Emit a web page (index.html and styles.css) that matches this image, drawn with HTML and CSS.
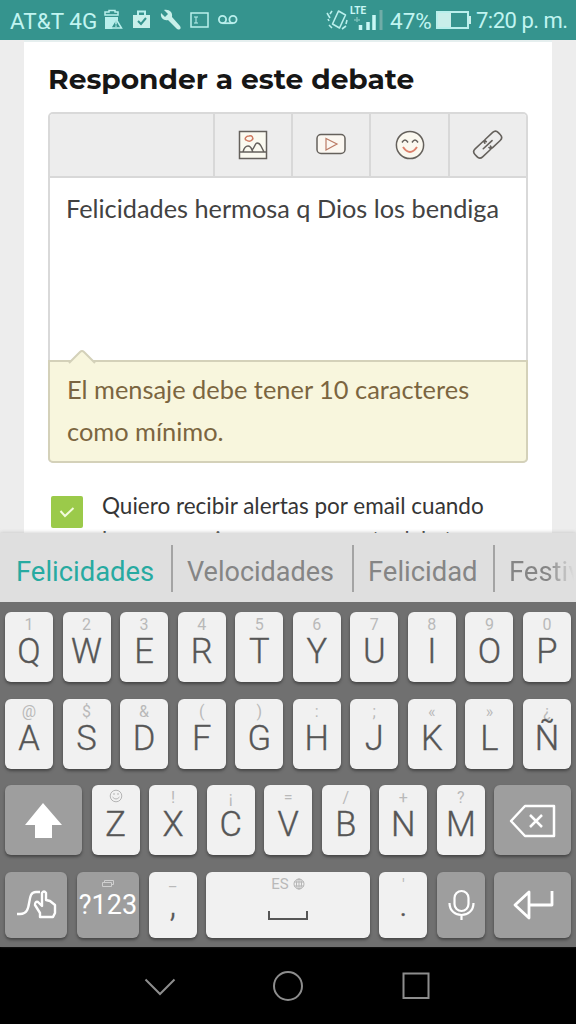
FILE: index.html
```html
<!DOCTYPE html>
<html lang="es">
<head>
<meta charset="utf-8">
<meta name="viewport" content="width=device-width">
<title>Responder a este debate</title>
<link rel="stylesheet" href="styles.css">
</head>
<body>
<header class="status">
  <span class="carrier">AT&amp;T 4G</span>
  <svg class="status-left" width="140" height="40" viewBox="0 0 140 40" fill="none" stroke="#b9efec" stroke-width="1.5">
    <path d="M5 15v-3h4v-1.500h6V12h3v3z"/><path d="M5 17h13v3l-6 9H5z" fill="#b9efec" stroke="none"/><path d="M16 19l5.500 9H10.500z" fill="#35948e"/><path d="M16 21v3.500M16 25.500v1.200"/>
    <path d="M33 15h17v13H33z" fill="#c9f0ea" stroke="none"/><path d="M38 15v-3.500h7V15" stroke-width="2"/><path d="M38 21l3 3 5-6" stroke="#35948e" stroke-width="2"/>
    <path d="M61 13l4 4 3-3-4-4c5-1 9 2 8 7l8 9c2 3-1 5-4 2l-8-8c-4 1-8-2-7-7z" fill="#c9f0ea" stroke="none"/>
    <path d="M91 13h17v14H91z"/><path d="M94 17h4M96 17v6M94 23h4" stroke-width="1"/>
    <circle cx="122.500" cy="19.500" r="3.600" stroke-width="1.800"/><circle cx="133" cy="19.500" r="3.600" stroke-width="1.800"/><path d="M122.500 23.200H133" stroke-width="1.800"/>
  </svg>
  <span class="grow"></span>
  <svg class="status-signal" width="60" height="40" viewBox="0 0 60 40" fill="none" stroke="#b9efec" stroke-width="1.6">
    <path d="M12.500 11l7 4-6 13-7-4zM1 13l3 5M2 19l1 2M6 11l-2 3M21 20l-1 4M16 29l4-3M3 25l3 3" stroke-linejoin="round"/>
    <text class="lte" x="24" y="14">LTE</text>
    <path d="M28 20h6M31 17v5" stroke="#75bdb7"/>
    <path d="M34.500 25v5M42 22v8M48 15v15" stroke="#c9f7f5" stroke-width="3.500"/>
    <path d="M55 10v20" stroke="#70aca7" stroke-width="3"/>
  </svg>
  <span class="percent">47%</span>
  <svg class="battery" width="38" height="40" viewBox="0 0 38 40"><path d="M2 12h31v16H2z" fill="none" stroke="#b9efec" stroke-width="2"/><path d="M3 13h13v14H3zM34 16h2v8h-2z" fill="#c9eeea"/></svg>
  <span class="clock">7:20 p. m.</span>
</header>
<main class="page">
  <section class="card">
    <h1 class="title">Responder a este debate</h1>
    <div class="editor">
      <div class="toolbar">
        <span class="tool-space"></span>
        <span class="tool"><svg width="30" height="30" viewBox="0 0 30 30" fill="#fbfaf0" stroke="#65615c" stroke-width="1.500"><path d="M1.500 1.500h27v27h-27zM2 22h26M5 22c1-4 3-6 5-6s3 1 4 4l1 2M14 20c2-1 3-7 5-7s3 1 4 3l3 6"/><path d="M8 10c-2-1 0-4 3-4 3-1 5 2 3 4-1 1-3 2-6 0z" stroke="#cf7a60"/></svg></span>
        <span class="tool"><svg width="30" height="30" viewBox="0 0 30 30" fill="#fbf7f1" stroke="#65615c" stroke-width="1.500"><rect x="1" y="4.500" width="28" height="19" rx="4"/><path d="M10 8.500l11 5.500-11 6z" stroke="#bb7b65" stroke-width="1.200"/></svg></span>
        <span class="tool"><svg width="30" height="30" viewBox="0 0 30 30" fill="none" stroke="#65615c" stroke-width="1.500"><circle cx="15" cy="15" r="13.600" fill="#fbf8ef"/><path d="M7 12.500q3-5 6 0M17 12.500q3-5 6 0"/><path d="M8 17q7 10 14 0" stroke="#dc806b" stroke-width="2"/></svg></span>
        <span class="tool"><svg width="30" height="30" viewBox="0 0 30 30" fill="none" stroke="#65615c" stroke-width="1.600" stroke-linejoin="round" stroke-linecap="round"><g transform="rotate(-43 15 15)"><path d="M14 11.500q0-2.500 3-2.500h10q4 0 4 4v3q0 4-4 4H17q-3 0-3-2.500"/><path d="M16 17.500q0 2.500-3 2.500H3q-4 0-4-4v-3q0-4 4-4h10q3 0 3 2.500"/><path d="M9 14.500h12"/></g></svg></span>
      </div>
      <div class="message">Felicidades hermosa q Dios los bendiga</div>
      <div class="warning">
        <svg class="warning-tip" width="26" height="13" viewBox="0 0 26 13"><path d="M0 13L11 2q2-2 4 0l11 11" fill="#f8f6dd" stroke="#d4d1b9" stroke-width="2"/></svg>
        <div class="warning-one">El mensaje debe tener 10 caracteres</div>
        <div class="warning-two">como mínimo.</div>
      </div>
    </div>
    <div class="subscribe">
      <span class="check"><svg width="16" height="12" viewBox="0 0 16 12" fill="none" stroke="#f3fbdc" stroke-width="2"><path d="M1.500 5l4.500 5 8.500-8"/></svg></span>
      <div class="subscribe-text">Quiero recibir alertas por email cuando<br><span class="second">haya mensajes nuevos en este debate</span></div>
    </div>
  </section>
</main>
<section class="keyboard">
  <div class="suggestions"><span class="word active">Felicidades</span><span class="word velocity">Velocidades</span><span class="word happiness">Felicidad</span><span class="word festival">Festiv</span></div>
  <div class="keys">
    <div class="row"><div class="key"><i>1</i><b>Q</b></div><div class="key"><i>2</i><b>W</b></div><div class="key"><i>3</i><b>E</b></div><div class="key"><i>4</i><b>R</b></div><div class="key"><i>5</i><b>T</b></div><div class="key"><i>6</i><b>Y</b></div><div class="key"><i>7</i><b>U</b></div><div class="key"><i>8</i><b>I</b></div><div class="key"><i>9</i><b>O</b></div><div class="key"><i>0</i><b>P</b></div></div>
    <div class="row"><div class="key"><i>@</i><b>A</b></div><div class="key"><i>$</i><b>S</b></div><div class="key"><i>&amp;</i><b>D</b></div><div class="key"><i>(</i><b>F</b></div><div class="key"><i>)</i><b>G</b></div><div class="key"><i>:</i><b>H</b></div><div class="key"><i>;</i><b>J</b></div><div class="key"><i>«</i><b>K</b></div><div class="key"><i>»</i><b>L</b></div><div class="key"><i>¿</i><b>Ñ</b></div></div>
    <div class="row">
      <div class="key dark wide"><svg width="77" height="70" viewBox="0 0 77 70"><path d="M38 18l19 22H47v13H30V40H20z" fill="#fff"/></svg></div>
      <div class="key"><i><svg class="smile" width="14" height="14" viewBox="0 0 14 14" fill="none" stroke="#b5b5b5"><circle cx="7" cy="7" r="5.800"/><path d="M5 4v2M9 4v2M3.500 8q3.500 4 7 0"/></svg></i><b>Z</b></div><div class="key"><i>!</i><b>X</b></div><div class="key"><i>¡</i><b>C</b></div><div class="key"><i>=</i><b>V</b></div><div class="key"><i>/</i><b>B</b></div><div class="key"><i>+</i><b>N</b></div><div class="key"><i>?</i><b>M</b></div>
      <div class="key dark wide"><svg width="77" height="70" viewBox="0 0 77 70" fill="none" stroke="#fff" stroke-width="2.500" stroke-linejoin="round"><path d="M17 36l14-15h29v30H31zM36 30l12 12M48 30L36 42"/></svg></div>
    </div>
    <div class="row last">
      <div class="key dark medium"><svg width="62" height="66" viewBox="0 0 62 66" fill="none" stroke="#fff" stroke-width="2.400" stroke-linejoin="round"><path d="M12 42h3c14 0 5-22 16-22h4"/><path d="M35 45v-4l-5-8q0-4 3-3l4 4V21q2-3 4 0v7l4 1 5 4v8l-2 4z"/></svg></div>
      <div class="key dark medium"><i><svg width="14" height="12" viewBox="0 0 14 12" fill="none" stroke="#cfcfcf"><path d="M1.500 4.500h9v4h-9zM3.500 4V2.500h9v4H11"/></svg></i><span class="symbols">?123</span></div>
      <div class="key"><i class="low">_</i><b class="comma">,</b></div>
      <div class="key space"><i class="language">ES <svg width="12" height="12" viewBox="0 0 12 12" fill="none" stroke="#b5b5b5"><circle cx="6" cy="6" r="5"/><path d="M1 4h10M1 8h10M6 1v10"/><ellipse cx="6" cy="6" rx="2.500" ry="5"/></svg></i><svg width="42" height="11" viewBox="0 0 42 11" fill="none" stroke="#565656" stroke-width="2"><path d="M2 0v8h38V0"/></svg></div>
      <div class="key"><i>'</i><b class="comma">.</b></div>
      <div class="key dark"><svg width="48" height="66" viewBox="0 0 48 66" fill="none" stroke="#fff" stroke-width="2.200"><rect x="17.500" y="19" width="14" height="20" rx="7"/><path d="M12.500 31c0 16 24 16 24 0M24.500 43v5"/></svg></div>
      <div class="key dark wide"><svg width="77" height="66" viewBox="0 0 77 66" fill="none" stroke="#fff" stroke-width="2.800" stroke-linejoin="round"><path d="M35 20v26L21 33zM35 33h23V19"/></svg></div>
    </div>
  </div>
</section>
<nav class="navigation">
  <svg width="32" height="32" viewBox="0 0 32 32"><path d="M1.500 9.500L16 24l14.500-14.500"/></svg>
  <svg width="32" height="32" viewBox="0 0 32 32"><circle cx="16" cy="16" r="14"/></svg>
  <svg width="32" height="32" viewBox="0 0 32 32"><rect x="3.500" y="3.500" width="25" height="24.500"/></svg>
</nav>
</body>
</html>
```
FILE: styles.css
```css
* { box-sizing: border-box; }
body { width: 576px; height: 1024px; margin: 0; overflow: hidden; background: #ededed; font-family: Roboto, "Liberation Sans", sans-serif; }
svg { flex: none; display: block; overflow: visible; }
.status { display: flex; align-items: center; height: 40px; padding: 0 9px 0 10px; background: #35948e; color: #c1f4f1; font-size: 22px; line-height: 42px; white-space: nowrap; }
.carrier { width: 90px; padding-top: 1px; font-size: 22.5px; }
.grow { flex: 1; }
.status-signal { margin-right: 4px; }
.lte { font: 700 10px Roboto, sans-serif; fill: #c9f7f5; stroke: none; }
.percent { width: 44px; font-size: 22.5px; padding-top: 2px; }
.battery { margin-left: 1px; }
.clock { width: 91px; margin-left: 3px; padding-top: 2px; font-size: 22px; letter-spacing: -.5px; }
.page { height: 493px; padding: 0 24px; overflow: hidden; background: #ededed; }
.card { height: 493px; padding: 20px 24px 0; background: #fff; border-top: 2px solid #e6efef; }
.title { margin: 0; height: 50px; font: 700 28.1px/35px Montserrat, Inter, sans-serif; color: #161616; white-space: nowrap; }
.editor { width: 480px; height: 351px; border: 2px solid #d9d9d9; border-radius: 5px; background: #fff; font-family: Lato, sans-serif; }
.toolbar { display: flex; height: 64px; background: #ededed; border-bottom: 2px solid #d8d8d8; border-radius: 3px 3px 0 0; }
.tool-space { width: 163px; }
.tool { display: flex; justify-content: center; align-items: center; width: 78.5px; border-left: 2px solid #d8d8d8; }
.message { height: 182px; padding: 14px 16px; color: #424242; font-size: 25.3px; line-height: 32px; white-space: nowrap; }
.warning { position: relative; width: 480px; height: 103px; margin-left: -2px; padding: 6px 17px; border: 2px solid #d4d1b9; border-radius: 0 0 5px 5px; background: #f8f6dd; color: #7b6540; font-size: 25.4px; line-height: 42px; white-space: nowrap; }
.warning-tip { position: absolute; left: 19px; top: -12px; }
.subscribe { display: flex; gap: 19px; padding: 31px 3px 0; font: 22.5px/34px Lato, sans-serif; color: #353535; white-space: nowrap; }
.check { display: flex; align-items: center; justify-content: center; width: 32px; height: 32px; margin-top: 2px; border-radius: 2px; background: #9bca4a; }
.subscribe-text { margin-top: -5.5px; }
.second { letter-spacing: -.25px; }
.keyboard { position: relative; height: 414px; background: #707070; box-shadow: 0 -1px 3px #b5b5b580; }
.suggestions { display: flex; height: 69px; overflow: hidden; padding-top: 12px; background: #dfdfdf; color: #858585; font-size: 27.4px; white-space: nowrap; }
.word { flex: none; height: 47px; padding-left: 14px; border-left: 2px solid #a4a4a4; line-height: 55px; }
.active { width: 171px; padding-left: 16px; border: 0; color: #27aaa1; }
.velocity { width: 181px; font-size: 27px; }
.happiness { width: 141px; }
.festival { width: 83px; overflow: hidden; color: transparent; background: linear-gradient(90deg,#858585 65%,#dfdfdf 98%); background-clip: text; border-color: #a4a4a4; }
.keys { padding: 10px 5px; }
.row { display: flex; gap: 9.55px; height: 70px; margin-bottom: 16.5px; }
.last { height: 66px; margin-bottom: 0; }
.key { flex: none; display: flex; flex-direction: column; align-items: center; width: 48px; border-radius: 6px; background: #f1f1f1; color: #565656; box-shadow: 0 2px 3px #464646; }
.key i { display: flex; align-items: center; justify-content: center; flex: none; height: 25px; color: #b9b9b9; font: 16px/25px Roboto, sans-serif; }
.smile { margin-top: -3px; }
.key b { height: 30px; font-weight: 300; font-size: 34.5px; line-height: 29px; -webkit-text-stroke: .35px #565656; }
.key .low { height: 19px; line-height: 22px; }
.key b.comma { margin-top: -7px; }
.key .low + b.comma { margin-top: -1px; }
.dark { background: #9e9e9e; }
.wide { width: 77px; }
.medium { width: 62.3px; }
.symbols { color: #fff; font-size: 27px; line-height: 16px; }
.space { width: 163.5px; }
.space > svg { margin-top: 14px; }
.key .language { gap: 4px; font-size: 15px; }
.navigation { display: flex; align-items: center; justify-content: center; gap: 96px; height: 77px; background: #000; }
.navigation path, .navigation circle, .navigation rect { fill: none; stroke: #8d8d8d; stroke-width: 2; }
```
